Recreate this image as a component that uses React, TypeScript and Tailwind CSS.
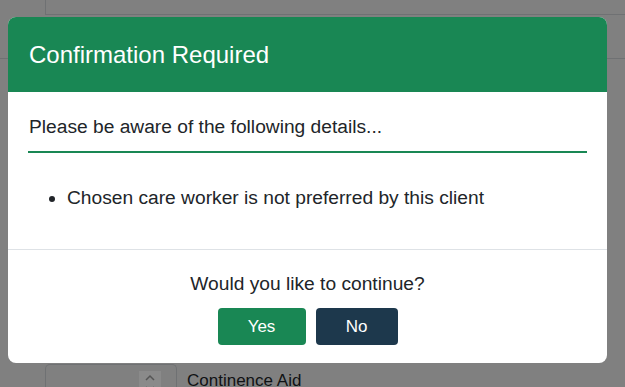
import React from 'react'

const font = { fontFamily: '"Liberation Sans", Arial, sans-serif' }

const Backdrop: React.FC = () => {
  return (
    <div className="flex flex-col">
      <div className="ml-[45px] h-[15px] border-l border-b border-[#6f7173]" />
      <div className="h-[44px] border-b border-[#6f7173]" />
      <div className="h-[305px]" />
      <div className="flex items-start">
        <div className="ml-[45px] flex h-[30px] w-[132px] justify-end rounded-t-[5px] border border-b-0 border-[#6f7173] pt-[6px] pr-[15px]">
          <div className="flex h-[24px] w-[22px] flex-col items-center bg-[#8a8a8a] pt-[3px]">
            <svg width="12" height="8" viewBox="0 0 12 8" fill="none">
              <path d="M2 6 L6 2 L10 6" stroke="#555" strokeWidth="1.5" />
            </svg>
            <svg width="12" height="8" viewBox="0 0 12 8" fill="none" className="mt-[3px]">
              <path d="M2 2 L6 6 L10 2" stroke="#555" strokeWidth="1.5" />
            </svg>
          </div>
        </div>
        <span className="ml-[10px] pt-[4px] text-[17px] leading-[1.5] text-[#101214]">
          Continence Aid
        </span>
      </div>
    </div>
  )
}

const App: React.FC = () => {
  return (
    <div className="relative h-[387px] w-full overflow-hidden bg-[#808080]" style={font}>
      <Backdrop />

      <div className="absolute left-[8px] top-[17px] w-[599px] overflow-hidden rounded-[8px] bg-white text-[#212529]">
        <div className="flex h-[75px] items-center bg-[#198754] px-[21px]">
          <h5 className="text-[24px] leading-[1.5] text-white">Confirmation Required</h5>
        </div>

        <div className="px-5 pt-[21px] pb-[36px]">
          <p className="border-b-2 border-[#198754] pb-[9px] pl-px text-[19.2px] leading-[1.5]">
            Please be aware of the following details...
          </p>
          <ul className="mt-[31px] list-disc pl-[39px] text-[19.2px] leading-[1.5]">
            <li>Chosen care worker is not preferred by this client</li>
          </ul>
        </div>

        <div className="flex flex-col items-center border-t border-[#dee2e6] pt-[20px] pb-[18px]">
          <p className="text-[19.2px] leading-[1.5]">Would you like to continue?</p>
          <div className="mt-[10px] flex gap-[10px]">
            <button className="h-[37px] w-[88px] rounded-[4px] bg-[#198754] text-[17px] text-white">
              Yes
            </button>
            <button className="h-[37px] w-[82px] rounded-[4px] bg-[#1d384c] text-[17px] text-white">
              No
            </button>
          </div>
        </div>
      </div>
    </div>
  )
}

export default App
